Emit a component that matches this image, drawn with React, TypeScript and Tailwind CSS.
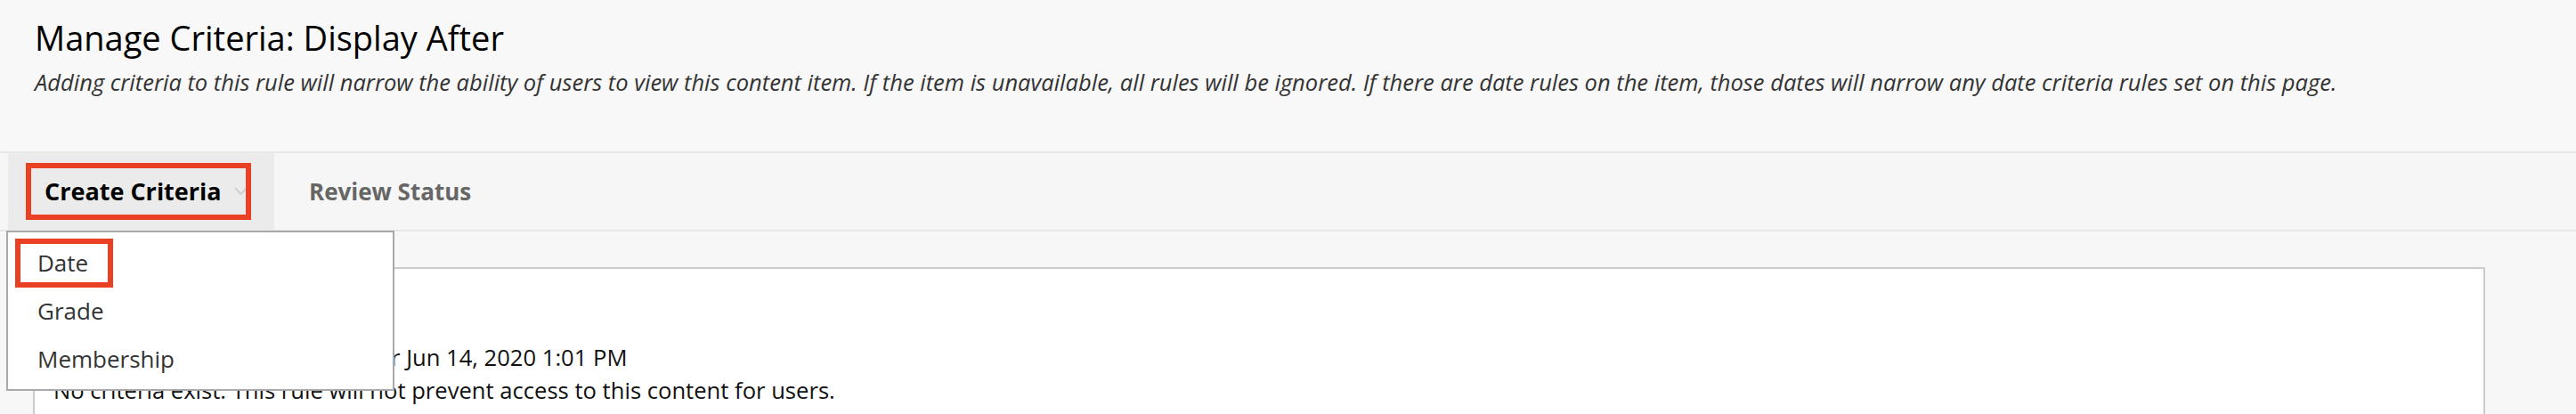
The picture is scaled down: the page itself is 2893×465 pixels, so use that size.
import React from 'react';

const font = { fontFamily: '"Open Sans", "Liberation Sans", sans-serif' };

const menuItems = ['Date', 'Grade', 'Membership'];

export default function App() {
  return (
    <div className="relative w-[2893px] h-[465px] overflow-hidden bg-[#f7f7f7]" style={font}>
      {/* Page header */}
      <div className="bg-[#f8f8f8] pl-[39px] pt-[19px] pb-[61px] border-b-2 border-[#e8e8e8]">
        <h1 className="text-[38px] leading-[46px] text-black font-normal">Manage Criteria: Display After</h1>
        <p className="mt-[11px] text-[25.5px] leading-[33px] italic text-[#333] whitespace-nowrap">
          Adding criteria to this rule will narrow the ability of users to view this content item. If the item is unavailable, all rules will be ignored. If there are date rules on the item, those dates will narrow any date criteria rules set on this page.
        </p>
      </div>

      {/* Tabs */}
      <div className="flex h-[88px] pl-[9px] bg-[#f6f6f6] border-b-2 border-[#e8e8e8]">
        <div className="flex items-center bg-[#ebebeb] pl-[20px] pr-[26px]">
          <div className="flex items-center w-[253px] h-[64px] border-[6px] border-[#ea4125] pl-[15px] overflow-hidden">
            <span className="text-[27px] font-bold text-black whitespace-nowrap">Create Criteria</span>
            <svg className="ml-[14px] shrink-0" width="15" height="10" viewBox="0 0 15 10">
              <polyline points="1,1 7.5,8 14,1" fill="none" stroke="#cfcfcf" strokeWidth="2" />
            </svg>
          </div>
        </div>
        <div className="flex items-center ml-[39px]">
          <span className="text-[26px] font-bold text-[#666]">Review Status</span>
        </div>
      </div>

      {/* Content */}
      <div className="pt-[40px] pl-[37px] pr-[102px]">
        <div className="bg-white border-2 border-[#cccccc] h-[300px] pl-[21px] pt-[81px] text-[25.6px] leading-[37px] text-[#111]">
          <p className="whitespace-nowrap pl-[6px]">Date Availability: Displayed after Jun 14, 2020 1:01 PM</p>
          <p className="whitespace-nowrap">No criteria exist. This rule will not prevent access to this content for users.</p>
        </div>
      </div>

      {/* Dropdown menu */}
      <div className="absolute left-[7px] top-[259px] w-[436px] h-[180px] bg-white border-2 border-[#a9a9a9] py-[7px]">
        {menuItems.map((item, i) => (
          <div key={item} className="flex items-center h-[54px] pl-[8px] text-[26px] text-[#333]">
            {i === 0 ? (
              <span className="flex items-center w-[110px] h-[55px] border-[6px] border-[#ea4125] pl-[19px]">{item}</span>
            ) : (
              <span className="pl-[25px]">{item}</span>
            )}
          </div>
        ))}
      </div>
    </div>
  );
}
